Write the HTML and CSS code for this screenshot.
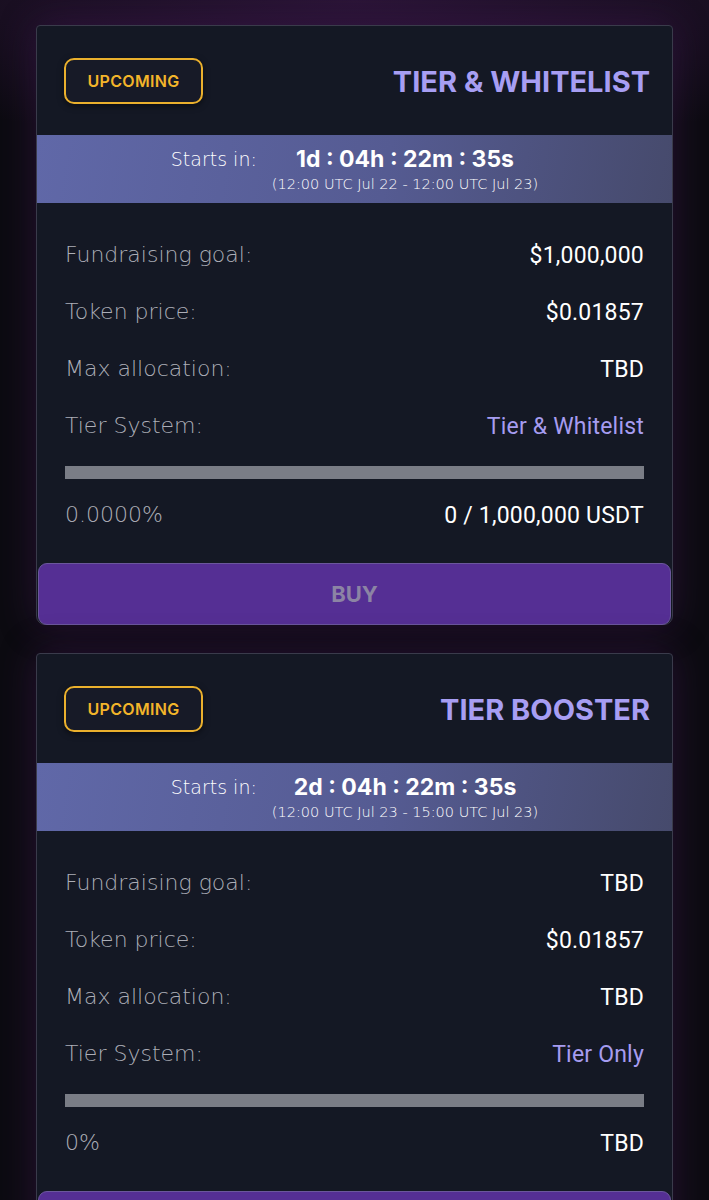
FILE: index.html
```html
<!DOCTYPE html>
<html lang="en">
<head>
  <meta charset="UTF-8" />
  <meta name="viewport" content="width=device-width,initial-scale=1" />
  <title>Pools</title>
  <link rel="stylesheet" href="styles.css">
</head>
<body>
  <div id="pools">

    <!-- Tier & Whitelist -->
    <div class="pool-card">
      <div class="pool-head">
        <span class="badge">UPCOMING</span>
        <h2 class="pool-title">TIER &amp; WHITELIST</h2>
      </div>
      <div class="countdown">
        <span class="cd-label">Starts in:</span>
        <div class="cd-time">
          <div class="cd-value">1d : 04h : 22m : 35s</div>
          <div class="cd-range">(12:00 UTC Jul 22 - 12:00 UTC Jul 23)</div>
        </div>
      </div>
      <div class="pool-info">
        <div class="info-row"><span class="info-label">Fundraising goal:</span><span class="info-val">$1,000,000</span></div>
        <div class="info-row"><span class="info-label">Token price:</span><span class="info-val">$0.01857</span></div>
        <div class="info-row"><span class="info-label">Max allocation:</span><span class="info-val">TBD</span></div>
        <div class="info-row"><span class="info-label">Tier System:</span><span class="info-val accent">Tier &amp; Whitelist</span></div>
        <div class="progress"><div class="progress-fill" style="width:0%"></div></div>
        <div class="info-row"><span class="info-label">0.0000%</span><span class="info-val">0 / 1,000,000 USDT</span></div>
      </div>
      <button class="buy-btn" disabled>BUY</button>
    </div>

    <!-- Tier Booster -->
    <div class="pool-card">
      <div class="pool-head">
        <span class="badge">UPCOMING</span>
        <h2 class="pool-title">TIER BOOSTER</h2>
      </div>
      <div class="countdown">
        <span class="cd-label">Starts in:</span>
        <div class="cd-time">
          <div class="cd-value">2d : 04h : 22m : 35s</div>
          <div class="cd-range">(12:00 UTC Jul 23 - 15:00 UTC Jul 23)</div>
        </div>
      </div>
      <div class="pool-info">
        <div class="info-row"><span class="info-label">Fundraising goal:</span><span class="info-val">TBD</span></div>
        <div class="info-row"><span class="info-label">Token price:</span><span class="info-val">$0.01857</span></div>
        <div class="info-row"><span class="info-label">Max allocation:</span><span class="info-val">TBD</span></div>
        <div class="info-row"><span class="info-label">Tier System:</span><span class="info-val accent">Tier Only</span></div>
        <div class="progress"><div class="progress-fill" style="width:0%"></div></div>
        <div class="info-row"><span class="info-label">0%</span><span class="info-val">TBD</span></div>
      </div>
      <button class="buy-btn" disabled>BUY</button>
    </div>

  </div>
</body>
</html>
```

FILE: styles.css
```css
/* RESET & GLOBAL */
* { margin:0; padding:0; box-sizing:border-box; }
html, body {
  background:#0c0b11; color:#eee;
  font-family:Inter, 'Open Sans', sans-serif;
}
body {
  background:radial-gradient(ellipse 90% 12% at 50% 0%, #2a1436, transparent), #0c0b11;
  height:1200px; overflow:hidden;
}

/* LIST */
#pools {
  display:flex; flex-direction:column; gap:28px;
  padding:25px 36px 40px;
}

/* CARD */
.pool-card {
  background:#141824; border:1px solid #3a3b4b; border-radius:4px 4px 9px 9px;
  box-shadow:0 0 36px rgba(70,24,90,0.45);
  display:flex; flex-direction:column;
}
.pool-head {
  display:flex; justify-content:space-between; align-items:center;
  padding:32px 22px 31px 27px;
}
.badge {
  width:139px; height:46px; border:2px solid #eab02d; border-radius:10px;
  display:flex; align-items:center; justify-content:center;
  color:#f3b52a; font-size:16px; font-weight:600; letter-spacing:.3px;
  background:#171a27; box-shadow:0 2px 6px rgba(0,0,0,0.5);
}
.pool-title {
  font-size:29px; font-weight:700; color:#a79ef3;
}

/* COUNTDOWN */
.countdown {
  height:68px; display:flex; justify-content:center; align-items:flex-start;
  gap:15px; padding-top:10px;
  background:linear-gradient(100deg, #6068a8 0%, #555b92 55%, #464a6c 100%);
}
.cd-label {
  font-family:'DejaVu Sans', sans-serif; font-weight:200;
  font-size:19px; color:#fff; margin-top:3px;
}
.cd-time { display:flex; flex-direction:column; align-items:center; }
.cd-value { font-size:23px; font-weight:700; color:#fff; line-height:28px; }
.cd-range {
  font-family:'DejaVu Sans', sans-serif; font-weight:200;
  font-size:14.5px; color:#fff; line-height:18px; margin-top:2px;
}

/* INFO */
.pool-info { padding:24px 28px 19px; }
.info-row {
  height:57px; display:flex; justify-content:space-between; align-items:center;
}
.info-label {
  font-family:'DejaVu Sans', sans-serif; font-weight:200;
  font-size:22px; color:#acaeb7; margin-top:-2px;
}
.info-val { font-family:Roboto, sans-serif; font-size:23px; color:#fff; letter-spacing:.2px; }
.info-val.accent { color:#a69cf0; }

.progress { height:13px; background:#7a7d86; margin:11px 0 8px; }
.progress-fill { height:100%; background:#a69cf0; }

/* BUTTON */
.buy-btn {
  height:62px; border:1px solid #6b579c; border-radius:9px;
  background:#552f94; color:#8c84a4;
  font-family:Inter, sans-serif; font-size:22px; font-weight:700;
  margin:0 1px -1px;
}
```
